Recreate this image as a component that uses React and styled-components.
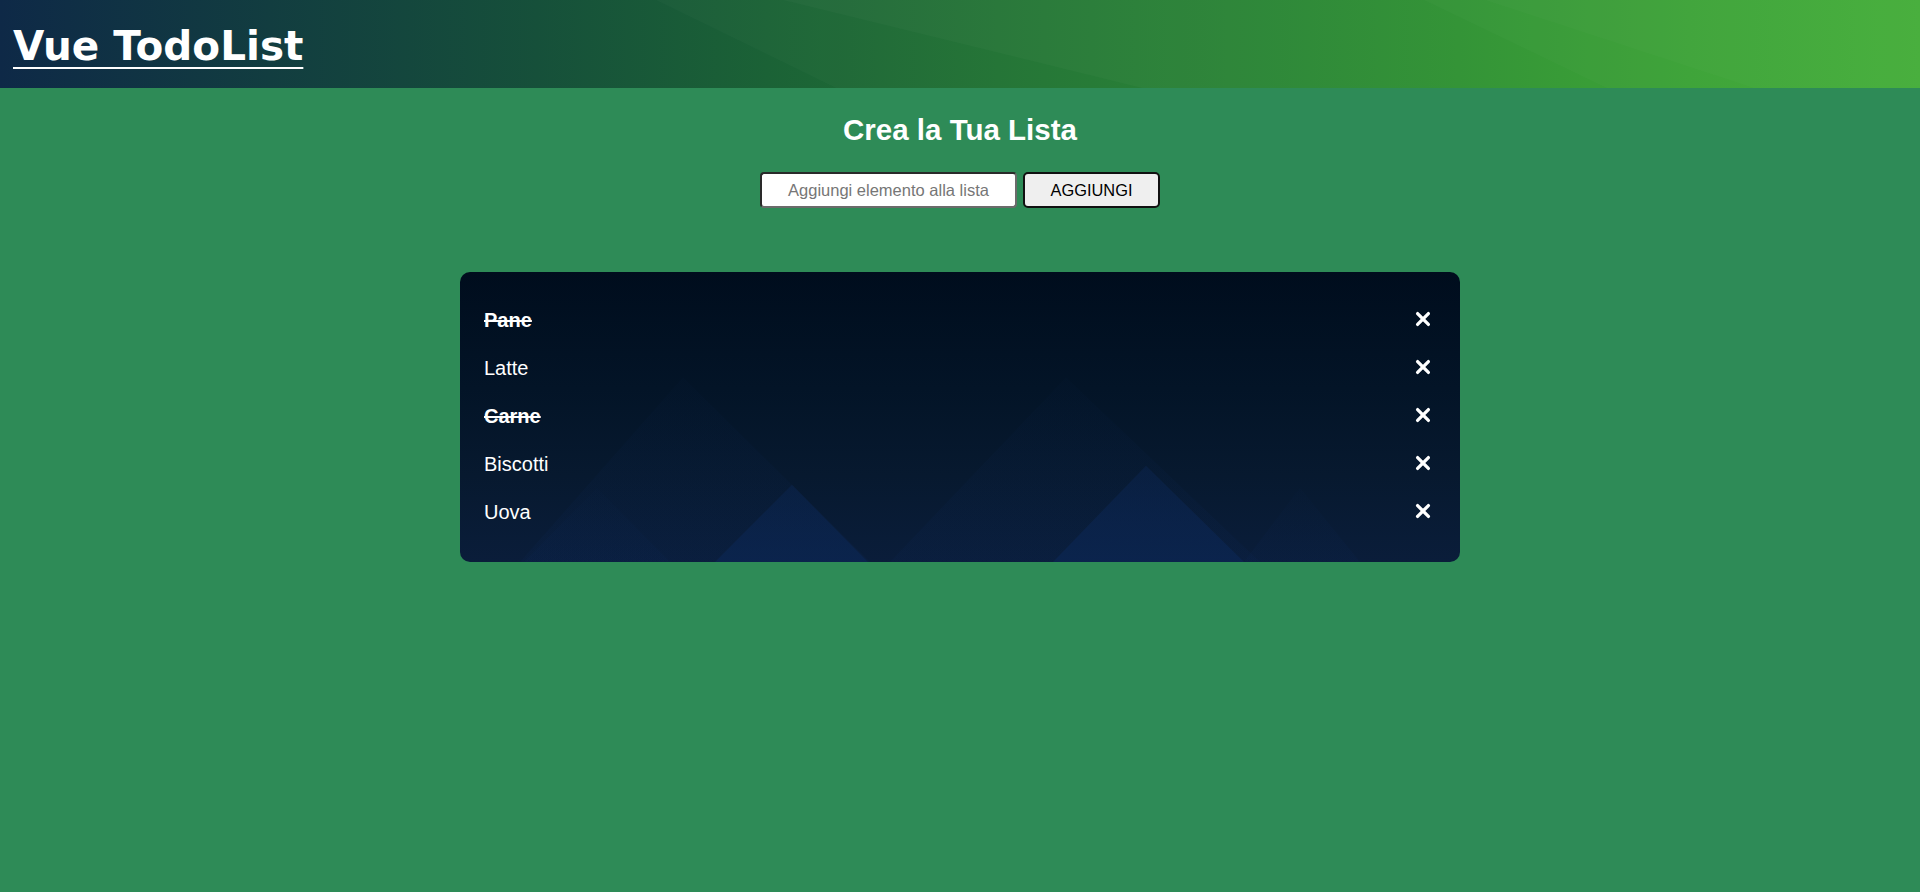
import styled, { createGlobalStyle } from "styled-components";

const GlobalStyle = createGlobalStyle`
  html,
  body {
    margin: 0;
    padding: 0;
    background-color: #2e8b57;
    font-family: "Liberation Sans", Arial, sans-serif;
  }

  * {
    box-sizing: border-box;
  }
`;

const Page = styled.div`
  min-height: 100vh;
  background-color: #2e8b57;
`;

const Header = styled.header`
  position: relative;
  height: 88px;
  display: flex;
  align-items: center;
  padding: 3px 0 0 13px;
  overflow: hidden;
  background: linear-gradient(
    90deg,
    #0e2947 0%,
    #123d40 14%,
    #16503a 28%,
    #1b6236 40%,
    #217334 52%,
    #268232 64%,
    #2c902f 76%,
    #35a02f 88%,
    #3dab30 100%
  );
`;

const HeaderShapes = styled.svg`
  position: absolute;
  inset: 0;
  width: 100%;
  height: 100%;
`;

const Logo = styled.h1`
  position: relative;
  margin: 0;
  font-family: "DejaVu Sans", Verdana, sans-serif;
  font-size: 40.5px;
  font-weight: 700;
  color: #fff;
  text-decoration: underline;
  text-decoration-thickness: 2px;
  text-underline-offset: 7px;
`;

const Main = styled.main`
  display: flex;
  flex-direction: column;
  align-items: center;
`;

const Title = styled.h2`
  margin: 25px 0 0;
  font-size: 29.5px;
  font-weight: 700;
  color: #fff;
`;

const AddForm = styled.form`
  display: flex;
  gap: 6px;
  margin-top: 25px;
`;

const AddInput = styled.input`
  width: 257px;
  height: 36px;
  padding: 0 10px;
  border: 2px solid #2a2a2a;
  border-right-color: #6b6b6b;
  border-bottom-color: #6b6b6b;
  border-radius: 4px;
  background: #fff;
  font-family: "Liberation Sans", Arial, sans-serif;
  font-size: 16.5px;
  text-align: center;
  color: #222;

  &::placeholder {
    color: #767676;
  }
`;

const AddButton = styled.button`
  width: 137px;
  height: 36px;
  border: 2px solid #111;
  border-radius: 5px;
  background-color: #efefef;
  font-family: "Liberation Sans", Arial, sans-serif;
  font-size: 16.4px;
  color: #000;
  cursor: pointer;
`;

const ListCard = styled.div`
  position: relative;
  width: 1000px;
  margin-top: 64px;
  padding: 24px 29px 26px 24px;
  border-radius: 10px;
  overflow: hidden;
  background: linear-gradient(180deg, #000d1d 0%, #031427 40%, #07192f 70%, #0a1d3a 100%);
`;

const CardShapes = styled.svg`
  position: absolute;
  inset: 0;
  width: 100%;
  height: 100%;
`;

const List = styled.ul`
  position: relative;
  margin: 0;
  padding: 0;
  list-style: none;
`;

const Item = styled.li`
  display: flex;
  align-items: center;
  justify-content: space-between;
  height: 48px;
`;

const ItemText = styled.span`
  font-size: 20px;
  color: #fff;
  font-weight: ${({ $done }) => ($done ? 700 : 400)};
  text-decoration: ${({ $done }) => ($done ? "line-through" : "none")};
  text-decoration-thickness: 2px;
`;

const RemoveBtn = styled.button`
  display: flex;
  align-items: center;
  justify-content: center;
  padding: 0;
  margin-top: -3px;
  border: none;
  background: transparent;
  cursor: pointer;
`;

const items = [
  { text: "Pane", done: true },
  { text: "Latte", done: false },
  { text: "Carne", done: true },
  { text: "Biscotti", done: false },
  { text: "Uova", done: false },
];

const XIcon = () => (
  <svg width="16" height="16" viewBox="0 0 16 16">
    <path
      d="M2.6 2.6 L13.4 13.4 M13.4 2.6 L2.6 13.4"
      stroke="#fff"
      strokeWidth="3.3"
      strokeLinecap="round"
      fill="none"
    />
  </svg>
);

export default function App() {
  return (
    <Page>
      <GlobalStyle />
      <Header>
        <HeaderShapes viewBox="0 0 1920 88" preserveAspectRatio="none">
          <polygon points="656,0 1920,0 1920,88 836,88" fill="rgba(255,255,255,0.02)" />
          <polygon points="783,0 1920,0 1920,88 1142,88" fill="rgba(255,255,255,0.025)" />
          <polygon points="1424,0 1920,0 1920,88 1607,88" fill="rgba(255,255,255,0.02)" />
          <polygon points="1485,0 1920,0 1920,88 1754,88" fill="rgba(255,255,255,0.015)" />
        </HeaderShapes>
        <Logo>Vue TodoList</Logo>
      </Header>

      <Main>
        <Title>Crea la Tua Lista</Title>
        <AddForm onSubmit={(e) => e.preventDefault()}>
          <AddInput type="text" placeholder="Aggiungi elemento alla lista" />
          <AddButton type="submit">AGGIUNGI</AddButton>
        </AddForm>

        <ListCard>
          <CardShapes viewBox="0 0 1000 289" preserveAspectRatio="none">
            <defs>
              <linearGradient id="tri" x1="0" y1="0" x2="0" y2="1">
                <stop offset="0" stopColor="#0c2550" stopOpacity="0.05" />
                <stop offset="1" stopColor="#0c2550" stopOpacity="0.2" />
              </linearGradient>
              <linearGradient id="triBright" x1="0" y1="0" x2="0" y2="1">
                <stop offset="0" stopColor="#0b2550" stopOpacity="0.45" />
                <stop offset="1" stopColor="#0b2550" stopOpacity="0.8" />
              </linearGradient>
            </defs>
            <polygon points="223,105 60,289 410,289" fill="url(#tri)" />
            <polygon points="606,105 430,289 800,289" fill="url(#tri)" />
            <polygon points="137,215 64,289 210,289" fill="url(#tri)" />
            <polygon points="840,215 784,289 900,289" fill="url(#tri)" />
            <polygon points="332,212 255,289 408,289" fill="url(#triBright)" />
            <polygon points="686,193 593,289 784,289" fill="url(#triBright)" />
          </CardShapes>
          <List>
            {items.map((item) => (
              <Item key={item.text}>
                <ItemText $done={item.done}>{item.text}</ItemText>
                <RemoveBtn type="button" aria-label="Rimuovi">
                  <XIcon />
                </RemoveBtn>
              </Item>
            ))}
          </List>
        </ListCard>
      </Main>
    </Page>
  );
}
